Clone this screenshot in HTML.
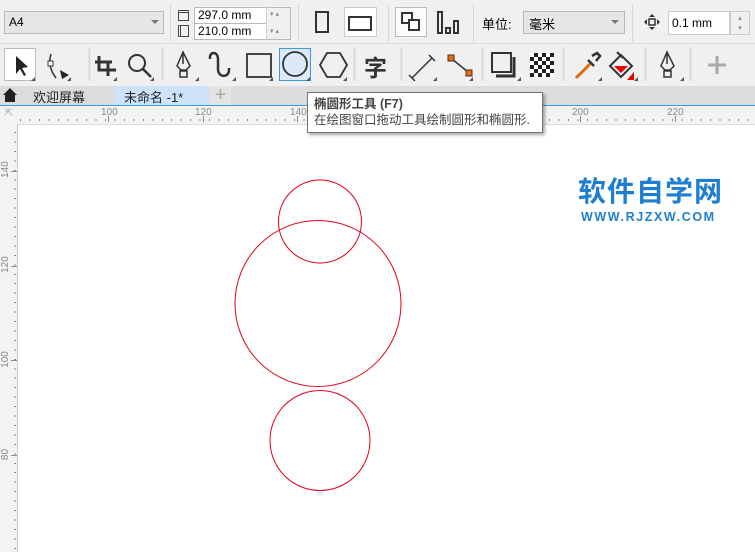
<!DOCTYPE html>
<html><head><meta charset="utf-8"><style>
*{margin:0;padding:0;box-sizing:border-box}
body{width:755px;height:552px;overflow:hidden;background:#f0f0f0;font-family:"Liberation Sans","Noto Sans CJK SC",sans-serif;position:relative;font-size:12px;color:#000}
.a{position:absolute}
.sep{position:absolute;width:1px;background:#d8d8d8}
.tri{position:absolute;width:0;height:0;border-left:4px solid transparent;border-bottom:4px solid #555}
</style></head><body>
<div class="a" style="left:0;top:0;width:755px;height:44px;background:#f0f0f0;border-bottom:1px solid #dcdcdc"></div>
<div class="a" style="left:4px;top:11px;width:160px;height:23px;border:1px solid #b9b9b9;background:#e6e6e6;padding:3px 4px;font-size:12px">A4</div>
<div class="a" style="left:151px;top:20px;border-left:4px solid transparent;border-right:4px solid transparent;border-top:4px solid #777"></div>
<div class="sep" style="left:170px;top:4px;height:38px"></div>
<div class="a" style="left:178px;top:10px;width:11px;height:11px;border:1px solid #444;border-top-width:3px;border-top-style:double"></div>
<div class="a" style="left:178px;top:25px;width:11px;height:12px;border:1px solid #444;border-left-width:3px;border-left-style:double"></div>
<div class="a" style="left:194px;top:7px;width:97px;height:33px;border:1px solid #b9b9b9;background:#fff"></div>
<div class="a" style="left:194px;top:23px;width:97px;height:1px;background:#b9b9b9"></div>
<div class="a" style="left:266px;top:7px;width:1px;height:33px;background:#d0d0d0"></div>
<div class="a" style="left:267px;top:8px;width:23px;height:31px;background:#f0f0f0"></div>
<div class="a" style="left:198px;top:8px;font-size:12px">297.0 mm</div>
<div class="a" style="left:198px;top:24px;font-size:12px">210.0 mm</div>
<div class="a" style="left:270px;top:10px;font-size:7px;color:#888">▾ ▴</div>
<div class="a" style="left:270px;top:27px;font-size:7px;color:#888">▾ ▴</div>
<div class="sep" style="left:298px;top:4px;height:38px"></div>
<div class="a" style="left:315px;top:11px;width:14px;height:22px;border:2px solid #333"></div>
<div class="a" style="left:344px;top:7px;width:33px;height:30px;background:#fff;border:1px solid #ccc"></div>
<div class="a" style="left:348px;top:16px;width:24px;height:15px;border:2px solid #333"></div>
<div class="sep" style="left:388px;top:4px;height:38px"></div>
<div class="a" style="left:395px;top:7px;width:32px;height:30px;background:#fbfbfb;border:1px solid #bbb"></div>
<div class="a" style="left:401px;top:12px;width:12px;height:12px;border:2px solid #333;background:#fbfbfb"></div>
<div class="a" style="left:408px;top:19px;width:12px;height:12px;border:2px solid #333;background:#fbfbfb"></div>
<div class="a" style="left:437px;top:11px;width:6px;height:23px;border:2px solid #333"></div>
<div class="a" style="left:445px;top:27px;width:6px;height:7px;border:2px solid #333"></div>
<div class="a" style="left:453px;top:20px;width:6px;height:14px;border:2px solid #333"></div>
<div class="sep" style="left:473px;top:4px;height:38px"></div>
<div class="a" style="left:482px;top:14px;font-size:13px">单位:</div>
<div class="a" style="left:523px;top:11px;width:102px;height:23px;border:1px solid #b9b9b9;background:#e6e6e6;padding:2px 5px;font-size:13px">毫米</div>
<div class="a" style="left:611px;top:20px;border-left:4px solid transparent;border-right:4px solid transparent;border-top:4px solid #777"></div>
<div class="sep" style="left:632px;top:4px;height:38px"></div>
<svg class="a" style="left:644px;top:14px" width="16" height="16" fill="#333"><path d="M8 0 L11 3 H5 Z M8 16 L5 13 H11 Z M0 8 L3 5 V11 Z M16 8 L13 11 V5 Z"/><rect x="5" y="5" width="6" height="6" fill="none" stroke="#333" stroke-width="1.5"/></svg>
<div class="a" style="left:668px;top:11px;width:62px;height:24px;border:1px solid #ccc;background:#fff;padding:4px 3px;font-size:12px">0.1 mm</div>
<div class="a" style="left:730px;top:11px;width:20px;height:24px;border:1px solid #ccc;background:#f0f0f0;font-size:7px;color:#888;text-align:center;line-height:10px;padding-top:2px">▴<br>▾</div>

<div class="a" style="left:0;top:44px;width:755px;height:42px;background:#f0f0f0"></div>
<svg class="a" style="left:0;top:44px" width="755" height="42" fill="none" stroke="#333" stroke-width="2">
 <rect x="4.5" y="4.5" width="31" height="32" fill="#fff" stroke="#bbb" stroke-width="1"/>
 <path d="M16 12 L16 30 L20 25 L24 32 L26 31 L22 24 L28 23 Z" fill="#222" stroke="none"/>
 <path d="M51 10 Q47 22 56 34" stroke-width="1.5"/><rect x="48" y="17" width="5" height="5" fill="#fff" stroke-width="1"/><path d="M60 26 L69 31 L62 35 Z" fill="#222" stroke="none"/>
 <rect x="89" y="4" width="1" height="32" stroke="#d8d8d8" stroke-width="1"/>
 <path d="M95 18 H112 M99 12 V26 H116 M108 18 V32" stroke-width="3"/>
 <circle cx="137" cy="19" r="8"/><path d="M143 25 L151 33" stroke-width="2.5"/>
 <rect x="162" y="4" width="1" height="32" stroke="#d8d8d8" stroke-width="1"/>
 <path d="M183 8 L177 22 L181 26 H186 L190 22 Z M183 8 V20 M180 27 H187 V33 H180 Z" stroke-width="1.5"/>
 <path d="M210 15 C209 7 218 7 218 15 V25 C218 34 229 34 229 26 V24" stroke-width="2.5"/>
 <rect x="247" y="10" width="24" height="23" stroke-width="1.8"/>
 <rect x="279.5" y="4.5" width="31" height="32" fill="#dbe9f9" stroke="#3c9be0" stroke-width="1"/>
 <circle cx="295" cy="20" r="12" stroke-width="1.8"/>
 <path d="M327 9 H340 L347 21 L340 33 H327 L320 21 Z" stroke-width="1.8"/>
 <rect x="354" y="4" width="1" height="32" stroke="#d8d8d8" stroke-width="1"/>
 <rect x="401" y="4" width="1" height="32" stroke="#d8d8d8" stroke-width="1"/>
 <path d="M412 34 L432 14 M409 31 L415 37 M429 11 L435 17" stroke-width="1.5"/>
 <path d="M452 15 L468 28" stroke-width="1.5"/><rect x="448" y="11" width="6" height="6" fill="#f60" stroke="#333" stroke-width="1"/><rect x="466" y="26" width="6" height="6" fill="#f60" stroke="#333" stroke-width="1"/>
 <rect x="482" y="4" width="1" height="32" stroke="#d8d8d8" stroke-width="1"/>
 <rect x="492" y="9" width="19" height="19" stroke-width="2"/><path d="M514 13 V32 H496" stroke-width="3"/>
 <rect x="530" y="9" width="24" height="24" fill="#222" stroke="none"/>
 <path d="M530 9 h4v4h-4z M538 9h4v4h-4z M546 9h4v4h-4z M534 13h4v4h-4z M542 13h4v4h-4z M550 13h4v4h-4z M530 17h4v4h-4z M538 17h4v4h-4z M546 17h4v4h-4z M534 21h4v4h-4z M542 21h4v4h-4z M550 21h4v4h-4z M530 25h4v4h-4z M538 25h4v4h-4z M546 25h4v4h-4z M534 29h4v4h-4z M542 29h4v4h-4z M550 29h4v4h-4z" fill="#fff" stroke="none"/>
 <rect x="563" y="4" width="1" height="32" stroke="#d8d8d8" stroke-width="1"/>
 <path d="M576 34 L590 20" stroke="#e8650a" stroke-width="3"/><path d="M588 16 L594 22 M592 12 L597 9 L600 12 L596 17" stroke-width="2.5"/>
 <path d="M610 22 L621 11 L632 22 L621 33 Z" stroke-width="2"/><path d="M614 22 H628 L621 29 Z" fill="#e00" stroke="none"/><path d="M634 28 V36 H627 Z" fill="#e00" stroke="none"/><path d="M617 8 L623 14" stroke-width="2"/>
 <rect x="645" y="4" width="1" height="32" stroke="#d8d8d8" stroke-width="1"/>
 <path d="M667 8 L661 22 L665 26 H670 L674 22 Z M667 8 V20 M664 27 H671 V33 H664 Z" stroke-width="1.5"/>
 <rect x="690" y="4" width="1" height="32" stroke="#d8d8d8" stroke-width="1"/>
 <path d="M717 12 V30 M708 21 H726" stroke="#aaa" stroke-width="3"/>
</svg>
<div class="tri" style="left:31px;top:77px"></div><div class="tri" style="left:67px;top:77px"></div><div class="tri" style="left:113px;top:77px"></div><div class="tri" style="left:150px;top:77px"></div><div class="tri" style="left:195px;top:77px"></div><div class="tri" style="left:232px;top:77px"></div><div class="tri" style="left:269px;top:77px"></div><div class="tri" style="left:306px;top:77px"></div><div class="tri" style="left:343px;top:77px"></div><div class="tri" style="left:433px;top:77px"></div><div class="tri" style="left:469px;top:77px"></div><div class="tri" style="left:517px;top:77px"></div><div class="tri" style="left:598px;top:77px"></div><div class="tri" style="left:634px;top:77px"></div><div class="tri" style="left:680px;top:77px"></div>
<div class="a" style="left:364px;top:49px;font-size:23px;font-weight:bold;color:#333">字</div>

<div class="a" style="left:0;top:86px;width:755px;height:19px;background:#dcdcdc"></div>
<svg class="a" style="left:2px;top:87px" width="16" height="16"><path d="M8 1 L1 8 H3 V15 H13 V8 H15 Z" fill="#222"/></svg>
<div class="a" style="left:33px;top:87px;font-size:13px;color:#222">欢迎屏幕</div>
<div class="a" style="left:115px;top:86px;width:94px;height:19px;background:#cde3fb"></div>
<div class="a" style="left:124px;top:87px;font-size:13px;color:#222">未命名 -1*</div>
<div class="a" style="left:210px;top:86px;width:21px;height:19px;background:#e4e4e4;color:#aaa;font-size:20px;line-height:18px;text-align:center">+</div>
<div class="a" style="left:0;top:105px;width:755px;height:1px;background:#2d9ee0"></div>

<div class="a" style="left:0;top:106px;width:755px;height:18px;background:#f3f3f3"></div>
<div class="a" style="left:0;top:106px;width:17px;height:446px;background:#f3f3f3"></div>
<div class="a" style="left:17px;top:119px;width:738px;height:2px;background:repeating-linear-gradient(90deg,transparent 0,transparent 3px,#888 3px,#888 4px,transparent 4px,transparent 9.45px)"></div>
<div class="a" style="left:14px;top:128px;width:2px;height:424px;background:repeating-linear-gradient(180deg,transparent 0,transparent 4px,#888 4px,#888 5px,transparent 5px,transparent 9.45px)"></div>
<div class="a" style="left:5px;top:108px;font-size:10px;color:#aaa">⇱</div>
<div class="a" style="left:101px;top:107px;font-size:10px;color:#888">100</div>
<div class="a" style="left:195px;top:107px;font-size:10px;color:#888">120</div>
<div class="a" style="left:290px;top:107px;font-size:10px;color:#888">140</div>
<div class="a" style="left:572px;top:107px;font-size:10px;color:#888">200</div>
<div class="a" style="left:667px;top:107px;font-size:10px;color:#888">220</div>
<div class="a" style="left:108px;top:116px;width:1px;height:6px;background:#888"></div>
<div class="a" style="left:203px;top:116px;width:1px;height:6px;background:#888"></div>
<div class="a" style="left:297px;top:116px;width:1px;height:6px;background:#888"></div>
<div class="a" style="left:580px;top:116px;width:1px;height:6px;background:#888"></div>
<div class="a" style="left:675px;top:116px;width:1px;height:6px;background:#888"></div>
<div class="a" style="left:-3px;top:164px;font-size:10px;color:#888;transform:rotate(-90deg)">140</div>
<div class="a" style="left:-3px;top:259px;font-size:10px;color:#888;transform:rotate(-90deg)">120</div>
<div class="a" style="left:-3px;top:354px;font-size:10px;color:#888;transform:rotate(-90deg)">100</div>
<div class="a" style="left:0px;top:449px;font-size:10px;color:#888;transform:rotate(-90deg)">80</div>
<div class="a" style="left:11px;top:171px;width:6px;height:1px;background:#888"></div>
<div class="a" style="left:11px;top:266px;width:6px;height:1px;background:#888"></div>
<div class="a" style="left:11px;top:360px;width:6px;height:1px;background:#888"></div>
<div class="a" style="left:11px;top:455px;width:6px;height:1px;background:#888"></div>

<div class="a" style="left:17px;top:124px;width:738px;height:428px;background:#fff;border-left:1px solid #ccc;border-top:1px solid #ddd"></div>
<svg class="a" style="left:0;top:0" width="755" height="552" fill="none" stroke="#e2001a" stroke-width="1">
 <circle cx="320" cy="221.5" r="41.5"/>
 <circle cx="318" cy="303.5" r="83"/>
 <circle cx="320" cy="440.5" r="50"/>
</svg>
<div class="a" style="left:578px;top:176px;font-size:28px;font-weight:bold;color:#1e7fd0;letter-spacing:1px;line-height:32px">软件自学网</div>
<div class="a" style="left:581px;top:210px;font-size:12.5px;font-weight:bold;color:#1e7fd0;letter-spacing:1.6px">WWW.RJZXW.COM</div>

<div class="a" style="left:307px;top:92px;width:236px;height:41px;background:#fff;border:1px solid #767676;box-shadow:2px 2px 3px rgba(0,0,0,.35);padding:3px 6px;font-size:12.5px;line-height:16px;color:#444;white-space:nowrap">
<b>椭圆形工具 (F7)</b><br>在绘图窗口拖动工具绘制圆形和椭圆形.</div>
</body></html>
